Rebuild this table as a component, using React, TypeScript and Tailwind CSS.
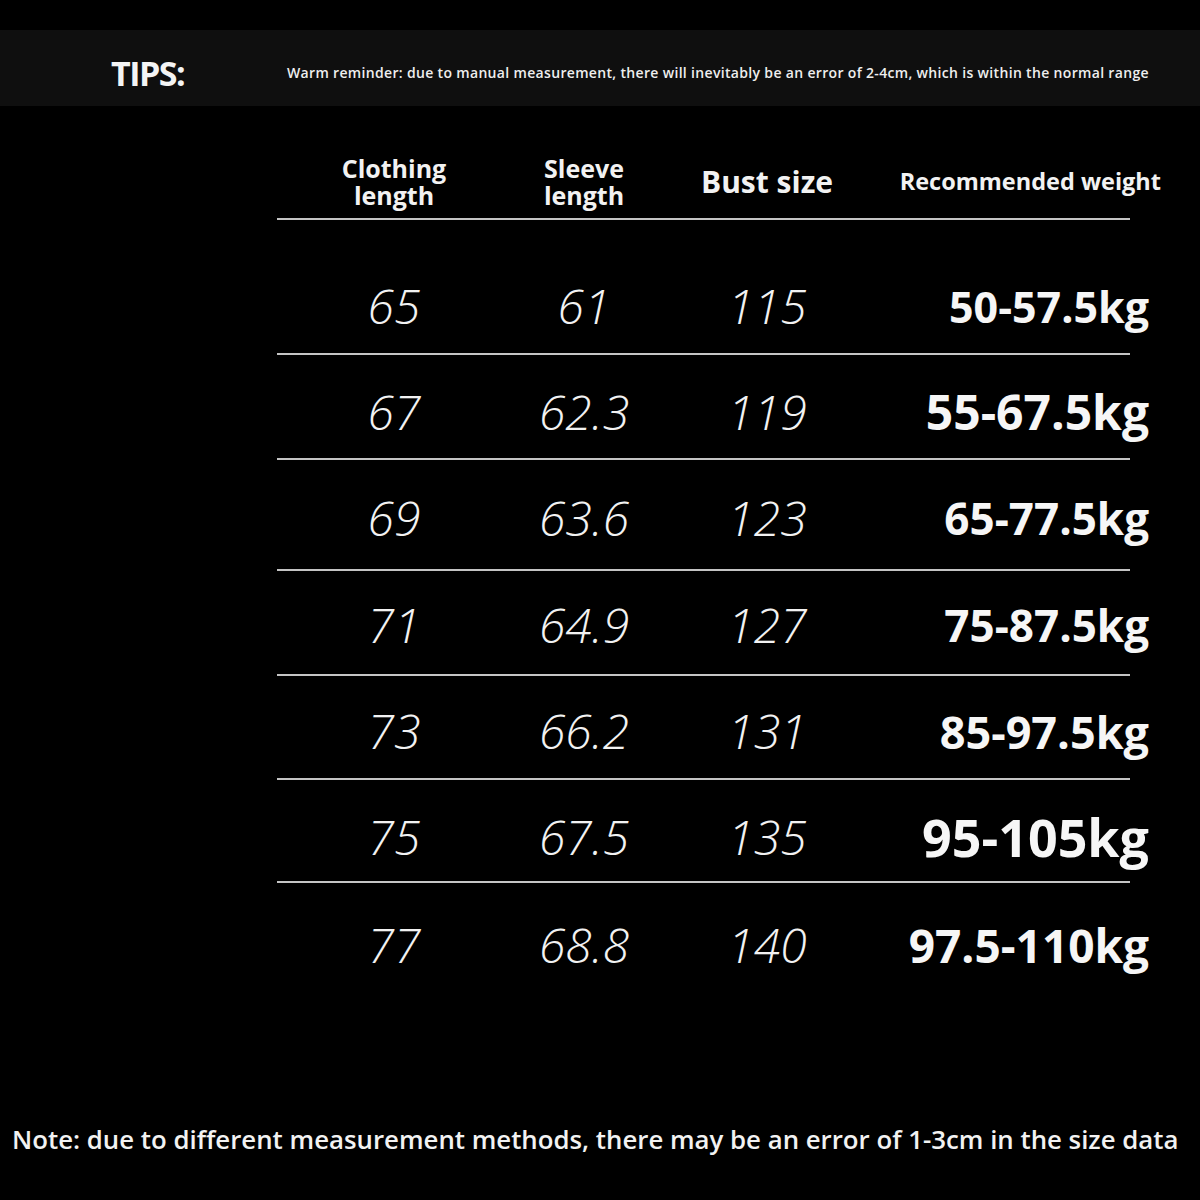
import React from "react";

const rows = [
  { a: "65", b: "61", c: "115", w: "50-57.5kg", row: "h-[135px] pt-[39px] border-b-2", wc: "text-[43px]" },
  { a: "67", b: "62.3", c: "119", w: "55-67.5kg", row: "h-[105px] pt-[11px] border-b-2", wc: "text-[48px]" },
  { a: "69", b: "63.6", c: "123", w: "65-77.5kg", row: "h-[111px] pt-[7px] border-b-2", wc: "text-[44px]" },
  { a: "71", b: "64.9", c: "127", w: "75-87.5kg", row: "h-[105px] pt-[5px] border-b-2", wc: "text-[44px]" },
  { a: "73", b: "66.2", c: "131", w: "85-97.5kg", row: "h-[104px] pt-[8px] border-b-2", wc: "text-[45px]" },
  { a: "75", b: "67.5", c: "135", w: "95-105kg", row: "h-[103px] pt-[13px] border-b-2", wc: "text-[52px]" },
  { a: "77", b: "68.8", c: "140", w: "97.5-110kg", row: "h-[110px] pt-[14px]", wc: "text-[46px]" },
];

export default function App() {
  return (
    <div className="w-[1200px] h-[1200px] bg-black text-white flex flex-col font-['Open_Sans',sans-serif] overflow-hidden">
      <div className="h-[30px]" />
      <div className="h-[76px] bg-[#0f0f0f] flex items-center pt-[10px]">
        <div className="w-[287px] pl-[111px] shrink-0 text-[34px] font-bold tracking-[-1.5px] leading-none text-[#f4f4f4]">
          TIPS:
        </div>
        <div className="text-[14px] font-semibold tracking-[0.33px] leading-none whitespace-nowrap text-[#eeeeee]">
          Warm reminder: due to manual measurement, there will inevitably be an error of 2-4cm, which is within the normal range
        </div>
      </div>

      <div className="ml-[277px] w-[853px] flex flex-col">
        <div className="h-[114px] pt-[40px] grid grid-cols-[234px_146px_220px_1fr] items-center border-b-2 border-[#c4c4c4] font-bold text-[#f2f2f2]">
          <div className="flex flex-col items-center text-[25px] leading-[27px]">
            <span>Clothing</span>
            <span>length</span>
          </div>
          <div className="flex flex-col items-center text-[25px] leading-[27px]">
            <span>Sleeve</span>
            <span>length</span>
          </div>
          <div className="text-center text-[30px] leading-none">Bust size</div>
          <div className="flex justify-end -mr-[31px] text-[23.5px] leading-none whitespace-nowrap">
            Recommended weight
          </div>
        </div>

        {rows.map((r) => (
          <div
            key={r.a}
            className={`${r.row} border-[#c4c4c4] grid grid-cols-[234px_146px_220px_1fr] items-center`}
          >
            <div className="text-center text-[48px] font-light italic leading-none text-[#f2f2f2]">{r.a}</div>
            <div className="text-center text-[48px] font-light italic leading-none text-[#f2f2f2]">{r.b}</div>
            <div className="text-center text-[48px] font-light italic leading-none text-[#f2f2f2]">{r.c}</div>
            <div className={`flex justify-end -mr-[19px] font-bold leading-none whitespace-nowrap text-[#f6f6f6] ${r.wc}`}>
              {r.w}
            </div>
          </div>
        ))}
      </div>

      <div className="mt-auto mb-[44px] pl-[12px] text-[25.8px] font-semibold leading-[34px] whitespace-nowrap text-[#f2f2f2]">
        Note: due to different measurement methods, there may be an error of 1-3cm in the size data
      </div>
    </div>
  );
}
